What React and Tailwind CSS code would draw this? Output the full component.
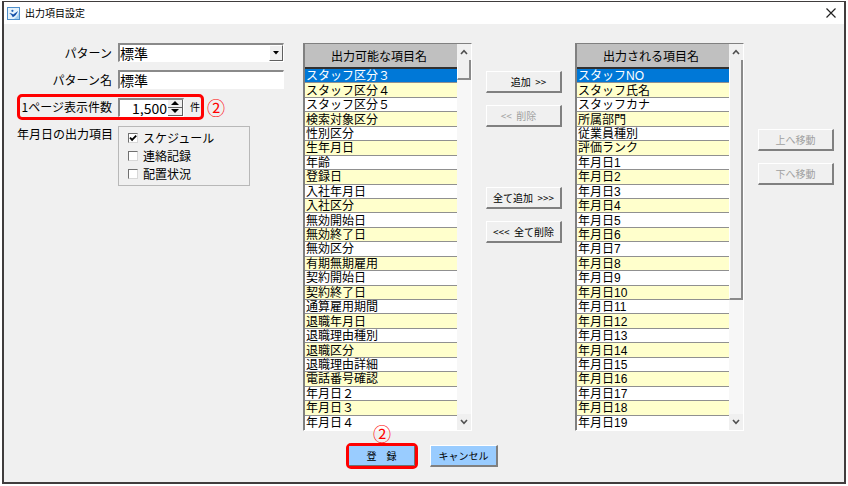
const availableItems = [
  'スタッフ区分３', 'スタッフ区分４', 'スタッフ区分５', '検索対象区分', '性別区分',
  '生年月日', '年齢', '登録日', '入社年月日', '入社区分', '無効開始日', '無効終了日',
  '無効区分', '有期無期雇用', '契約開始日', '契約終了日', '通算雇用期間', '退職年月日',
  '退職理由種別', '退職区分', '退職理由詳細', '電話番号確認', '年月日２', '年月日３', '年月日４',
];

const outputItems = [
  'スタッフNO', 'スタッフ氏名', 'スタッフカナ', '所属部門', '従業員種別', '評価ランク',
  '年月日1', '年月日2', '年月日3', '年月日4', '年月日5', '年月日6', '年月日7', '年月日8',
  '年月日9', '年月日10', '年月日11', '年月日12', '年月日13', '年月日14', '年月日15',
  '年月日16', '年月日17', '年月日18', '年月日19',
];

function Chevron({ down }) {
  return (
    <svg viewBox="0 0 8 6" className={down ? 'h-1.5 w-2 rotate-180' : 'h-1.5 w-2'} fill="none" stroke="#505050" strokeWidth="1.6">
      <path d="M1 5 L4 1.6 L7 5" />
    </svg>
  );
}

function ScrollBar({ thumb }) {
  return (
    <div className="flex w-3.5 shrink-0 flex-col bg-[#f7f7f7]">
      <button type="button" aria-label="上へスクロール" className="flex h-4 items-center justify-center bg-[#f0f0f0]">
        <Chevron />
      </button>
      <div className="flex-1">
        <div className={`${thumb} border-r-2 border-b-2 border-l border-[#8a8a8a] border-l-white bg-[#f0f0f0]`} />
      </div>
      <button type="button" aria-label="下へスクロール" className="flex h-4 items-center justify-center bg-[#f0f0f0]">
        <Chevron down />
      </button>
    </div>
  );
}

function ItemList({ title, items, thumb }) {
  return (
    <div className="flex min-w-0 flex-1 border border-t-[#808080] border-r-white border-b-white border-l-[#808080]">
      <table className="flex min-w-0 flex-1 flex-col border-l border-[#808080]">
        <thead className="block">
          <tr className="flex h-[25px] items-center justify-center border-b-2 border-[#303030] bg-[#c0c0c0] pr-1">
            <th className="font-normal">{title}</th>
          </tr>
        </thead>
        <tbody className="grid h-[361px] auto-rows-fr font-['Liberation_Sans','Noto_Sans_CJK_JP',sans-serif]">
          {items.map((item, i) => (
            <tr
              key={item}
              className={
                i === 0
                  ? 'flex min-h-0 items-center border-b border-[#909090] bg-[#0078d7] text-white'
                  : i % 2
                    ? 'flex min-h-0 items-center border-b border-[#909090] bg-[#ffffcc]'
                    : 'flex min-h-0 items-center border-b border-[#909090] bg-white last:border-white'
              }
            >
              <td className="px-px pt-px leading-3 whitespace-nowrap">{item}</td>
            </tr>
          ))}
        </tbody>
      </table>
      <ScrollBar thumb={thumb} />
    </div>
  );
}

function PushButton({ children, disabled }) {
  return (
    <button
      type="button"
      disabled={disabled}
      className="h-[22px] w-full border border-r-2 border-b-2 border-white border-r-[#808080] border-b-[#808080] bg-[#f0f0f0] text-[10px] leading-4 whitespace-pre disabled:text-[#a0a0a0]"
    >
      {children}
    </button>
  );
}

function CheckRow({ label, checked }) {
  return (
    <label className="flex h-[18px] items-center gap-[5px]">
      <span className="relative flex size-2.5">
        <input
          type="checkbox"
          defaultChecked={checked}
          className="peer size-2.5 appearance-none border border-t-[#707070] border-r-[#d8d8d8] border-b-[#d8d8d8] border-l-[#707070] bg-white"
        />
        <svg viewBox="0 0 10 10" className="pointer-events-none absolute inset-0 hidden size-2.5 peer-checked:block" fill="none" stroke="#000" strokeWidth="1.8">
          <path d="M2 4.6 L4.1 6.9 L8.2 2.7" />
        </svg>
      </span>
      {label}
    </label>
  );
}

function Step({ className }) {
  return <span className={`${className} text-lg leading-[18px] text-[#f00]`}>②</span>;
}

const field = 'h-[19px] border-t-2 border-l-2 border-r border-b border-t-[#8a8a8a] border-l-[#8a8a8a] border-r-white border-b-white bg-white';

export default function App() {
  return (
    <div className="min-h-screen bg-white px-0.5 pt-px pb-0.5 font-['Noto_Sans_CJK_JP',sans-serif] text-xs leading-4 text-black">
      <div className="border-2 border-t border-[#403d3d] bg-[#f0f0f0]">
        <header className="flex h-[22px] items-center bg-white pr-2 pl-[3px]">
          <svg viewBox="0 0 13 13" className="size-[13px]">
            <rect x="0.5" y="0.5" width="12" height="12" fill="#e6f3fc" stroke="#4f8fcb" />
            <path d="M7 12 Q11 9 12 5 V12 Z" fill="#a5d0f0" />
            <path d="M2.2 6 L4.6 6.6 L6.2 7.6 L11 4 Q9.2 8.8 5.8 10.2 Q5 7.8 2.2 6 Z" fill="#1450a8" />
            <circle cx="5.4" cy="3.8" r="1.1" fill="#1c62b8" />
          </svg>
          <h1 className="ml-[5px] text-[10px]">出力項目設定</h1>
          <button type="button" aria-label="閉じる" className="ml-auto">
            <svg viewBox="0 0 10 10" className="size-2.5" fill="none" stroke="#222" strokeWidth="1.2">
              <path d="M0.5 0.5 L9.5 9.5 M9.5 0.5 L0.5 9.5" />
            </svg>
          </button>
        </header>

        <main className="flex gap-[13px] pt-[19px] pr-2.5 pl-[13px]">
          <form className="w-[273px] shrink-0 pr-1.5">
            <div className="flex items-center gap-1.5">
              <label htmlFor="pattern" className="w-[95px] text-right">パターン</label>
              <div className="relative flex flex-1">
                <select id="pattern" className={`${field} w-full appearance-none text-sm leading-4`}>
                  <option>標準</option>
                </select>
                <span className="pointer-events-none absolute top-0.5 right-px bottom-px flex w-3.5 items-center justify-center border border-white border-r-[#606060] border-b-[#606060] bg-[#f0f0f0]">
                  <svg viewBox="0 0 6 4" className="h-1 w-1.5"><path d="M0 0 H6 L3 3.5 Z" /></svg>
                </span>
              </div>
            </div>

            <div className="mt-2 flex items-center gap-1.5">
              <label htmlFor="pattern-name" className="w-[95px] text-right">パターン名</label>
              <input id="pattern-name" type="text" defaultValue="標準" className={`${field} min-w-0 flex-1 text-sm leading-4`} />
            </div>

            <div className="mt-[5px] flex items-center gap-[3px]">
              <div className="flex h-[26px] w-[187px] items-center gap-1.5 rounded-[5px] border-3 border-[#f00]">
                <label htmlFor="page-size" className="w-[92px] text-right whitespace-nowrap">1ページ表示件数</label>
                <div className={`${field} flex w-[66px]`}>
                  <input id="page-size" type="text" defaultValue="1,500" className="w-0 flex-1 pr-px text-right text-sm leading-4" />
                  <div className="flex w-[15px] flex-col">
                    <button type="button" aria-label="増やす" className="flex flex-1 items-center justify-center border-r border-b border-[#606060] bg-[#f0f0f0]">
                      <svg viewBox="0 0 8 4" className="h-1 w-2"><path d="M0 4 L4 0 L8 4 Z" /></svg>
                    </button>
                    <button type="button" aria-label="減らす" className="flex flex-1 items-center justify-center border-r border-b border-[#606060] bg-[#f0f0f0]">
                      <svg viewBox="0 0 8 4" className="h-1 w-2"><path d="M0 0 L4 4 L8 0 Z" /></svg>
                    </button>
                  </div>
                </div>
                <span className="text-[10px]">件</span>
              </div>
              <Step className="block" />
            </div>

            <div role="group" aria-labelledby="date-items" className="mt-1.5 flex items-start gap-1.5">
              <span id="date-items" className="w-[95px] text-right whitespace-nowrap">年月日の出力項目</span>
              <div className="w-[132px] border border-[#b8b8b8] px-[9px] py-0.5">
                <CheckRow label="スケジュール" checked />
                <CheckRow label="連絡記録" />
                <CheckRow label="配置状況" />
              </div>
            </div>
          </form>

          <ItemList title="出力可能な項目名" items={availableItems} thumb="h-5" />

          <div className="flex w-[77px] shrink-0 flex-col pt-7 pl-px">
            <div className="flex flex-col gap-3">
              <PushButton>{'　追加  >>'}</PushButton>
              <PushButton disabled>{'<<  削除　'}</PushButton>
            </div>
            <div className="mt-[60px] flex flex-col gap-3">
              <PushButton>{'全て追加  >>>'}</PushButton>
              <PushButton>{'<<<  全て削除'}</PushButton>
            </div>
          </div>

          <ItemList title="出力される項目名" items={outputItems} thumb="h-60" />

          <div className="flex w-[77px] shrink-0 flex-col gap-3 pt-[86px] pl-px">
            <PushButton disabled>上へ移動</PushButton>
            <PushButton disabled>下へ移動</PushButton>
          </div>
        </main>

        <footer className="flex items-center justify-center gap-3 pt-3 pr-1 pb-[13px]">
          <div className="relative rounded-[5px] border-3 border-[#f00]">
            <Step className="absolute bottom-full left-6 mb-1" />
            <button type="submit" className="block h-5 w-[66px] border-r border-b border-[#707070] bg-[#99ccff] text-[10px]">登　録</button>
          </div>
          <button type="button" className="h-[22px] w-[68px] border border-r-2 border-b-2 border-white border-r-[#808080] border-b-[#808080] bg-[#99ccff] text-[10px]">キャンセル</button>
        </footer>
      </div>
    </div>
  );
}
